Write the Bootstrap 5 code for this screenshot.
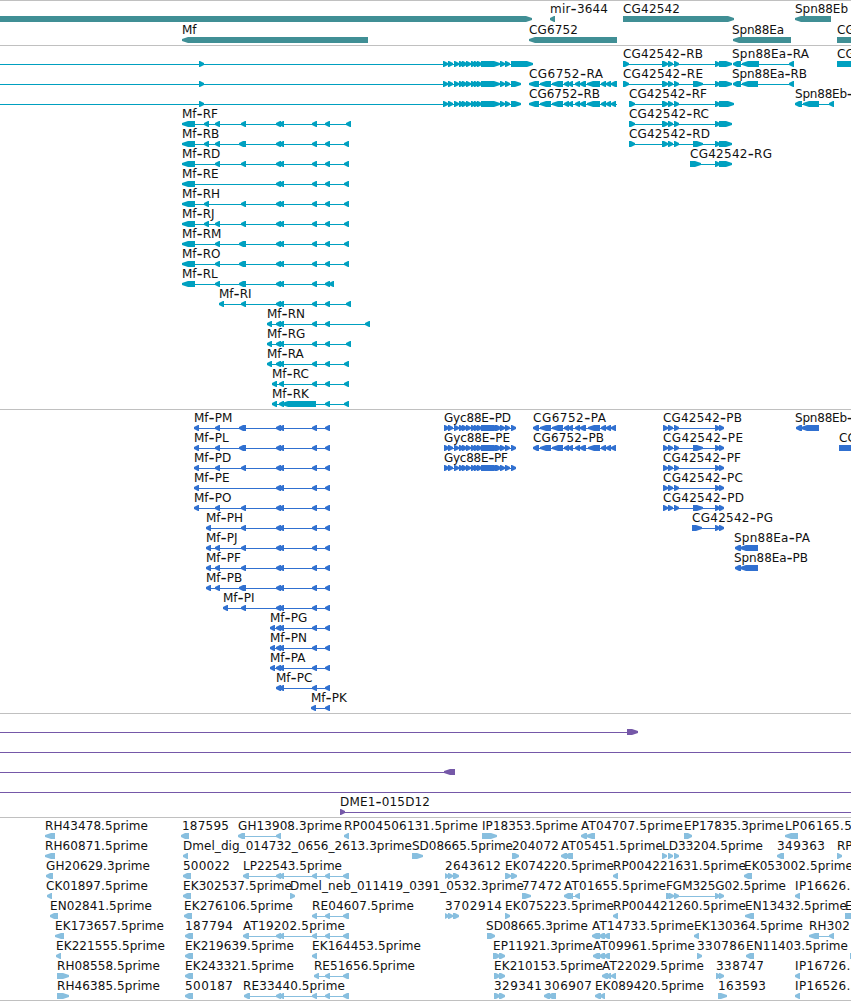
<!DOCTYPE html>
<html lang="en">
<head>
<meta charset="utf-8">
<title>Genome browser</title>
<link href="https://cdn.jsdelivr.net/npm/bootstrap@5.3.0/dist/css/bootstrap.min.css" rel="stylesheet">
<script src="https://cdn.jsdelivr.net/npm/bootstrap@5.3.0/dist/js/bootstrap.bundle.min.js"></script>
<style>
  body { background: #fff; color: #000; }
  .track { border-top: 1px solid #c0c0c0; padding-top: 1px; }
  .browser { border-bottom: 1px solid #c0c0c0; }
  .lane { height: 20px; overflow: visible; font: 12px "DejaVu Sans", sans-serif; }
  .lane text { fill: #111; }
  .lane .dash { font-size: 17px; }
  #genes { height: 45px; color: #408f95; }
  #genes .lane { height: 21px; }
  #transcripts { height: 364px; color: #00a0c0; }
  #proteins { height: 304px; color: #3070d0; }
  #clones { height: 104px; color: #7558a8; }
  #ests { height: 183px; color: #88bfdf; }
</style>
</head>
<body class="overflow-hidden">
<main class="browser container-fluid p-0 d-flex flex-column overflow-hidden">
  <section class="track d-flex flex-column" id="genes"></section>
  <section class="track d-flex flex-column" id="transcripts"></section>
  <section class="track d-flex flex-column" id="proteins"></section>
  <section class="track d-flex flex-column" id="clones"></section>
  <section class="track d-flex flex-column" id="ests"></section>
</main>
<script>
// A feature is "label@x:width | exons"; an exon is "<start-end" or ">start-end",
// "=start-end" is a plain block and "_start-end" the thin intron line.
const end1 = '<276-281 <279-284 <312-317 <325-330';
const gyc = '>443-448 >448-453 >454-459 >459-464 >462-467 >466-471 >471-476 >474-479 >477-482 >481-500 >500-505 >505-510 ';
const gycP = '_444-516 >444-449 >448-453 >454-459 >459-464 >462-467 >466-471 >471-476 >474-479 >477-482 >481-500 >495-501 >500-505 >505-510 >511-516';
const cg67 = '_529-617 <529-539 <540-551 <552-563 <564-569 <568-573 <575-580 <580-586 <587-600 <601-606 <606-611 ';
const cg67P = '_533-616 <533-539 <540-551 <552-563 <564-569 <568-573 <575-580 <580-586 <588-600 <601-606 <606-611 <611-616';
const cgm = '>662-668 >668-673 >674-679 >715-720 ';
const cgp = '_663-724 >663-668 >668-673 >674-679 >715-720 >719-724';
const est5 = '<276-281 <279-284 <312-317 <325-330 <343-349';
const mf = (l, mid, last) => `Mf-${l}@182|_182-${last} <182-195 ${mid} ${end1} <${last - 5}-${last}`;
const mp = (l, x, mid) => `Mf-${l}@${x}|_${x}-330 <${x}-${x + 5} ${mid} ${end1}`;

const tracks = {
  genes: [
    ['|>0-532', 'mir-3644@550:58|<550-555', 'CG42542@623:57|>623-734', 'Spn88Eb@795:53|<795-831'],
    ['Mf@182|<182-368', 'CG6752@529:49|<529-617', 'Spn88Ea@732:52|<733-791', 'CG@837|=837-860']
  ],
  transcripts: [
    ['|_0-532 >199-204 ' + gyc + '>511-533', 'CG42542-RB@623:80|_623-731 >623-629 ' + cgm + '>719-732', 'Spn88Ea-RA@732:77|_733-794 <733-741 <742-759 <789-794', 'CG@837|=837-860'],
    ['|_0-521 >199-204 ' + gyc + '>511-521', 'CG6752-RA@529:74|' + cg67 + '<611-617', 'CG42542-RE@623:80|_623-731 >623-629 >693-703 ' + cgm + '>719-732', 'Spn88Ea-RB@732:75|_733-794 <733-741 <742-758 <789-794'],
    ['|_0-521 >199-204 ' + gyc + '>511-521', 'CG6752-RB@529:71|' + cg67 + '<611-616', 'CG42542-RF@629:78|_629-733 >629-635 ' + cgm + '>719-734', 'Spn88Eb-@795:58|_795-834 <795-802 <803-819 <829-834'],
    [mf('RF', '<204-209 <215-220 <241-246', 351), 'CG42542-RC@629:80|_629-731 >629-635 ' + cgm + '>719-732'],
    [mf('RB', '<204-209 <215-220 <239-246', 349), 'CG42542-RD@629:81|_629-731 >629-635 >693-703 ' + cgm + '>719-732'],
    [mf('RD', '<215-220 <241-246', 349), 'CG42542-RG@690:82|_690-731 >690-701 >715-720 >719-732'],
    [mf('RE', '', 349)],
    [mf('RH', '<204-209 <241-246', 349)],
    [mf('RJ', '<204-209 <215-220 <241-246', 349)],
    [mf('RM', '<215-220 <239-246', 349)],
    [mf('RO', '<215-220 <239-246', 349)],
    [mf('RL', '<215-220 <239-246', 334)],
    ['Mf-RI@219|_219-351 <219-224 <241-246 <346-351 ' + end1],
    ['Mf-RN@267|_267-370 <267-272 <365-370 ' + end1],
    ['Mf-RG@267|_267-351 <267-272 <346-351 ' + end1],
    ['Mf-RA@267|_267-349 <267-272 <344-349 ' + end1],
    ['Mf-RC@272|_272-349 <272-277 <279-284 <312-317 <325-330 <344-349'],
    ['Mf-RK@272|_272-349 <272-277 <279-284 <282-316 <325-330 <344-349']
  ],
  proteins: [
    [mp('PM', 194, '<215-220 <239-246'), 'Gyc88E-PD@444:67|' + gycP, 'CG6752-PA@533:73|' + cg67P, 'CG42542-PB@663:79|' + cgp, 'Spn88Eb-@795:58|<796-802 <801-819'],
    [mp('PL', 194, '<215-220 <239-246'), 'Gyc88E-PE@444:66|' + gycP, 'CG6752-PB@533:71|' + cg67P, 'CG42542-PE@663:80|>693-703 ' + cgp, 'CG@839|=839-860'],
    [mp('PD', 194, '<215-220 <241-246'), 'Gyc88E-PF@444:64|' + gycP, 'CG42542-PF@663:78|' + cgp],
    [mp('PE', 194, ''), 'CG42542-PC@663:80|' + cgp],
    [mp('PO', 194, '<215-220 <241-246'), 'CG42542-PD@663:81|>693-703 ' + cgp],
    [mp('PH', 206, '<241-246'), 'CG42542-PG@692:81|_692-724 >692-702 >715-720 >719-724'],
    [mp('PJ', 206, '<215-220 <241-246'), 'Spn88Ea-PA@734:76|<735-741 <740-758'],
    [mp('PF', 206, '<215-220 <241-246'), 'Spn88Ea-PB@734:74|<735-741 <740-758'],
    [mp('PB', 206, '<215-220 <239-246')],
    [mp('PI', 223, '<241-246')],
    [mp('PG', 270, '')], [mp('PN', 270, '')], [mp('PA', 270, '')],
    ['Mf-PC@276|_276-330 ' + end1],
    ['Mf-PK@311|_311-330 <311-316 <325-330']
  ],
  clones: [
    ['|_0-637 >627-638'], ['|_0-860'], ['|_0-455 <444-455'], ['|_0-860'],
    ['DME1-015D12@340:90|_340-860 >340-345']
  ],
  ests: [
    ['RH43478.5prime@45:103|<45-55', '187595@182:47|<181-189', 'GH13908.3prime@238:104|_238-281 <238-245 <276-281', 'RP004506131.5prime@344:134|<344-349', 'IP18353.5prime@482:96|>482-497', 'AT04707.5prime@581:102|<581-587 <586-595', 'EP17835.3prime@684:100|>684-692', 'LP06165.5prime@785:104|<785-798'],
    ['RH60871.5prime@45:103|<45-55', 'Dmel_dig_014732_0656_2613.3prime@183:229|<183-188', 'SD08665.5prime@412:101|>412-423', '204072@512:47|>512-519', 'AT05451.5prime@561:102|<561-567 <565-573', 'LD33204.5prime@662:101|>662-667 >668-673 >674-679', '349363@777:48|<777-784', 'RP@837|>837-842'],
    ['GH20629.3prime@46:104|<46-53', '500022@183:47|<183-191', 'LP22543.5prime@243:99|_243-349 <243-249 ' + est5, '2643612@445:56|>445-449 >448-453 >453-459', 'EK074220.5prime@505:109|>505-511 >511-517', 'RP004221631.5prime@613:133|<613-618', 'EK053002.5prime@744:109|<744-752'],
    ['CK01897.5prime@46:102|<47-52', 'EK302537.5prime@183:109|<183-191', 'Dmel_neb_011419_0391_0532.3prime@290:234|>290-295', '77472@522:40|>522-531', 'AT01655.5prime@564:102|_564-580 <564-571 <568-573 <575-580', 'FGM325G02.5prime@666:120|_666-723 >666-672 >669-674 >674-679 >715-720 >719-724', 'IP16626.3prime@795:100|<795-800'],
    ['EN02841.5prime@50:102|<50-58', 'EK276106.5prime@184:109|<184-192', 'RE04607.5prime@312:102|_312-349 <312-317 <325-330 <343-349', '3702914@445:57|>445-449 >448-453 >453-459', 'EK075223.5prime@505:109|>505-510', 'RP004421260.5prime@613:133|<613-618', 'EN13432.5prime@745:102|<745-754', 'E@845|>845-857'],
    ['EK173657.5prime@55:109|<55-64', '187794@185:48|<185-193', 'AT19202.5prime@243:102|_243-349 <243-249 ' + est5, 'SD08665.3prime@486:102|>487-495', 'AT14733.5prime@592:102|<592-600 <599-605 <604-610', 'EK130364.5prime@694:109|<694-699', 'RH302@809:41|_809-834 <809-819 <829-834'],
    ['EK221555.5prime@56:109|<56-61', 'EK219639.5prime@185:109|<185-193', 'EK164453.5prime@312:109|<312-317', 'EP11921.3prime@493:100|>493-500 >499-505', 'AT09961.5prime@593:102|<593-600 <599-605 <604-610', '330786@697:48|>697-702', 'EN11403.5prime@746:102|<746-754', '|>850-855'],
    ['RH08558.5prime@57:103|>57-69', 'EK243321.5prime@185:109|<185-193', 'RE51656.5prime@314:101|_314-349 <314-319 <325-330 <343-349', 'EK210153.5prime@494:109|>494-500 >499-505', 'AT22029.5prime@602:102|<602-608 <606-611 <611-616', '338747@716:48|>716-721 >719-724', 'IP16726.3prime@795:100|<795-800'],
    ['RH46385.5prime@57:103|>57-69', '500187@185:48|<185-193', 'RE33440.5prime@243:102|_244-349 <244-250 ' + est5, '329341@494:48|>494-500 >499-505', '306907@544:48|<544-550 <548-556', 'EK089420.5prime@595:109|<595-601 <600-605', '163593@718:48|>718-727', 'IP16526.3prime@795:100|<795-800']
  ]
};

function exon(token) {
  const kind = token[0], [a, b] = token.slice(1).split('-').map(Number);
  if (kind === '_') return `<rect x="${a}" y="17" width="${b - a}" height="1"/>`;
  if (kind === '=') return `<rect x="${a}" y="14" width="${b - a}" height="6"/>`;
  const head = b - a > 8 ? 6 : Math.min(4, b - a);
  return kind === '<'
    ? `<path d="M${a} 16V18L${a + head} 20H${b}V14H${a + head}Z"/>`
    : `<path d="M${b} 16V18L${b - head} 20H${a}V14H${b - head}Z"/>`;
}
function feature(f) {
  const [name, exons] = f.split('|');
  const [label, place] = name.split('@');
  let out = exons.split(' ').filter(Boolean).map(exon).join('');
  if (label) {
    const [x, w] = place.split(':');
    const text = label.replace('-', '<tspan class="dash" dy="1">-</tspan><tspan dy="-1">') + (label.includes('-') ? '</tspan>' : '');
    out += `<text x="${x}" y="11"${w ? ` textLength="${w}"` : ''}>${text}</text>`;
  }
  return out;
}
for (const [id, lanes] of Object.entries(tracks))
  document.getElementById(id).innerHTML = lanes.map(l =>
    `<svg class="lane w-100 flex-shrink-0" fill="currentColor">${l.map(feature).join('')}</svg>`).join('');
</script>
</body>
</html>
